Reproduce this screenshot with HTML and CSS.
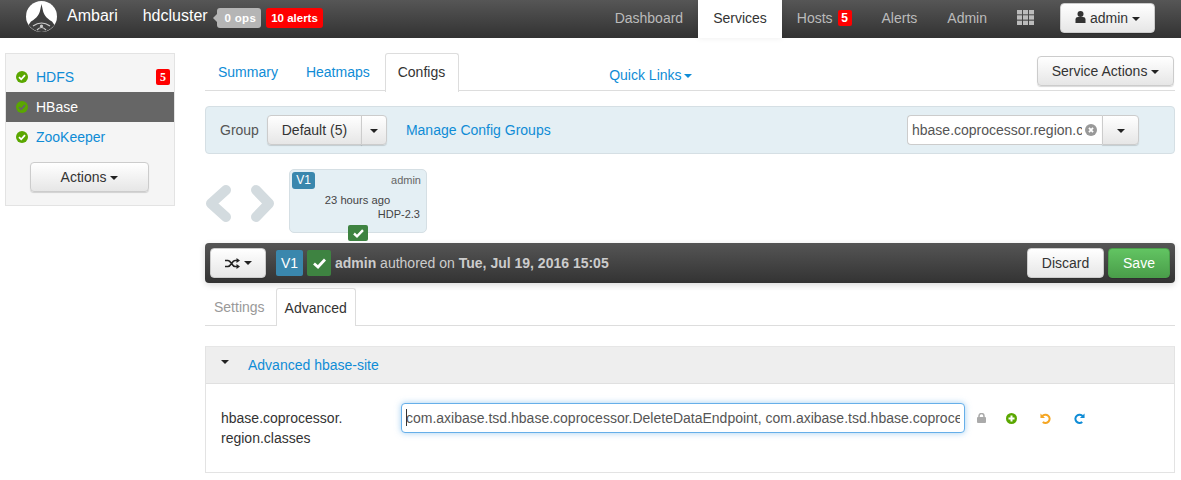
FILE: index.html
```html
<!DOCTYPE html>
<html lang="en">
<head>
  <meta charset="UTF-8">
  <title>Ambari - hdcluster</title>
  <link rel="stylesheet" href="styles.css">
</head>
<body>

<!-- top bar -->
<header class="navbar">
  <div class="brand">
    <svg class="logo" width="31" height="31" viewBox="0 0 31 31">
      <circle cx="15.500" cy="15.500" r="15.500" fill="#fff"/>
      <path d="M15.500 3L16.800 9C17.500 13 20 17 26 20.500L28.500 24C25 28 21 31 15.500 31C10 31 6 28 2.500 24L5 20.500C11 17 13.500 13 14.200 9Z" fill="#3f3f3f"/>
      <path d="M7 25Q15.500 19 24 25M11 29Q15.500 24 20 29" fill="none" stroke="#ccc" stroke-width="1.200"/>
      <circle cx="15.500" cy="25" r="1.600" fill="#ccc"/>
    </svg>
    <span class="brand-name">Ambari</span>
    <span class="cluster">hdcluster</span>
    <span class="ops">0 ops</span>
    <span class="alerts">10 alerts</span>
  </div>
  <nav class="topnav">
    <a class="topnav-item">Dashboard</a>
    <a class="topnav-item active">Services</a>
    <a class="topnav-item">Hosts <b class="count">5</b></a>
    <a class="topnav-item">Alerts</a>
    <a class="topnav-item">Admin</a>
    <a class="topnav-item grid-item">
      <svg width="17" height="15" viewBox="0 0 17 15" fill="#bbb">
        <rect width="5" height="4.300"/><rect x="6" width="5" height="4.300"/><rect x="12" width="5" height="4.300"/>
        <rect y="5.300" width="5" height="4.300"/><rect x="6" y="5.300" width="5" height="4.300"/><rect x="12" y="5.300" width="5" height="4.300"/>
        <rect y="10.700" width="5" height="4.300"/><rect x="6" y="10.700" width="5" height="4.300"/><rect x="12" y="10.700" width="5" height="4.300"/>
      </svg>
    </a>
  </nav>
  <button class="btn user-btn">
    <svg width="11" height="12" viewBox="0 0 10 12" fill="#333"><circle cx="5" cy="3" r="3"/><path d="M0 12V8.500C0 6.800 1.200 6 2.500 6H7.500C8.800 6 10 6.800 10 8.500V12Z"/></svg>
    admin <i class="caret"></i>
  </button>
</header>

<div class="page">

  <!-- service list -->
  <aside class="sidebar">
    <ul class="services">
      <li class="service"><svg class="ok" viewBox="0 0 12 12"><circle cx="6" cy="6" r="6"/><path d="M3 6.200L5.200 8.300L9 4.200"/></svg><a>HDFS</a><b class="count side-count">5</b></li>
      <li class="service active"><svg class="ok" viewBox="0 0 12 12"><circle cx="6" cy="6" r="6"/><path d="M3 6.200L5.200 8.300L9 4.200"/></svg><a>HBase</a></li>
      <li class="service"><svg class="ok" viewBox="0 0 12 12"><circle cx="6" cy="6" r="6"/><path d="M3 6.200L5.200 8.300L9 4.200"/></svg><a>ZooKeeper</a></li>
    </ul>
    <button class="btn actions-btn">Actions <i class="caret"></i></button>
  </aside>

  <main class="main">

    <div class="tabs service-tabs">
      <a class="tab">Summary</a>
      <a class="tab">Heatmaps</a>
      <a class="tab active">Configs</a>
      <a class="quick-links">Quick Links<i class="caret blue"></i></a>
      <button class="btn service-actions">Service Actions <i class="caret"></i></button>
    </div>

    <div class="group-bar">
      <span class="group-label">Group</span>
      <div class="btn-group">
        <button class="btn group-btn">Default (5)</button>
        <button class="btn split"><i class="caret"></i></button>
      </div>
      <a class="manage">Manage Config Groups</a>
      <div class="filter">
        <div class="filter-input">
          <input class="filter-text" type="text" value="hbase.coprocessor.region.classes" readonly>
          <svg class="clear" width="12" height="12" viewBox="0 0 13 13"><circle cx="6.500" cy="6.500" r="6.500" fill="#999"/><path d="M4.300 4.300L8.700 8.700M8.700 4.300L4.300 8.700" stroke="#fff" stroke-width="2"/></svg>
        </div>
        <button class="btn filter-drop"><i class="caret"></i></button>
      </div>
    </div>

    <div class="versions">
      <svg class="arrows" width="70" height="39" viewBox="0 0 70 39" fill="none" stroke="#d3dbdf" stroke-width="10" stroke-linecap="round" stroke-linejoin="round">
        <path d="M21 6L6 19.500L21 33"/><path d="M51 6L64 19.500L51 33"/>
      </svg>
      <div class="version-card">
        <div class="card-top"><span class="v-label small">V1</span><span class="card-user">admin</span></div>
        <div class="card-time">23 hours ago</div>
        <div class="card-stack">HDP-2.3</div>
        <span class="card-check"><svg width="11" height="9" viewBox="0 0 11 9" fill="none" stroke="#fff" stroke-width="2.400"><path d="M1 4.500L4 7.300L10 1.200"/></svg></span>
      </div>
    </div>

    <div class="version-bar">
      <button class="btn shuffle-btn">
        <svg width="15" height="11" viewBox="0 0 15 11" fill="none" stroke="#222" stroke-width="1.700"><path d="M0 2.500H3C6 2.500 7 8.500 10 8.500H12M0 8.500H3C6 8.500 7 2.500 10 2.500H12"/><path d="M11.500 0L15 2.500L11.500 5ZM11.500 6L15 8.500L11.500 11Z" fill="#222" stroke="none"/></svg>
        <i class="caret"></i>
      </button>
      <span class="v-label">V1</span>
      <span class="current-check"><svg width="13" height="11" viewBox="0 0 13 11" fill="none" stroke="#fff" stroke-width="2.800"><path d="M1 5.500L5 9L12 1.500"/></svg></span>
      <span class="authored"><b>admin</b> authored on <b>Tue, Jul 19, 2016 15:05</b></span>
      <button class="btn discard">Discard</button>
      <button class="btn save">Save</button>
    </div>

    <div class="tabs sub-tabs">
      <a class="tab muted">Settings</a>
      <a class="tab active">Advanced</a>
    </div>

    <section class="panel">
      <div class="panel-head">
        <i class="caret panel-caret"></i>
        <a>Advanced hbase-site</a>
      </div>
      <div class="panel-body">
        <div class="prop-name">hbase.coprocessor.<br>region.classes</div>
        <div class="prop-field">
          <input class="prop-input" type="text" value="com.axibase.tsd.hbase.coprocessor.DeleteDataEndpoint, com.axibase.tsd.hbase.coprocessor.CompactRawDataEndpoint" readonly>
          <span class="cursor"></span>
        </div>
        <div class="prop-icons">
          <svg class="lock" width="9" height="10" viewBox="0 0 9 10"><path d="M2 4.500V3a2.500 2.500 0 0 1 5 0V4.500" fill="none" stroke="#aaa" stroke-width="1.500"/><rect y="4" width="9" height="6" rx="1" fill="#aaa"/></svg>
          <svg width="11" height="11" viewBox="0 0 11 11"><circle cx="5.500" cy="5.500" r="5.500" fill="#5aa700"/><path d="M5.500 2.500V8.500M2.500 5.500H8.500" stroke="#fff" stroke-width="2"/></svg>
          <svg width="11" height="11" viewBox="0 0 12 12" fill="none"><path d="M2.500 3.500A4.500 4.500 0 1 1 3 9.700" stroke="#f5a623" stroke-width="2.200"/><path d="M0.500 0.500V5.500H5.500Z" fill="#f5a623"/></svg>
          <svg width="11" height="11" viewBox="0 0 12 12" fill="none"><path d="M9.500 3.500A4.500 4.500 0 1 0 9 9.700" stroke="#0f8cd6" stroke-width="2.200"/><path d="M11.500 0.500V5.500H6.500Z" fill="#0f8cd6"/></svg>
        </div>
      </div>
    </section>

  </main>
</div>

</body>
</html>
```

FILE: styles.css
```css
*{box-sizing:border-box}
body{margin:0;font-family:"Liberation Sans",Arial,sans-serif;font-size:14px;line-height:20px;color:#333;background:#fff;overflow:hidden}
a{color:#0f8cd6}
ul{list-style:none;margin:0;padding:0}
input{font:14px/20px "Liberation Sans",Arial,sans-serif;color:#555;outline:0}

.caret{display:inline-block;width:0;height:0;border-top:4px solid #222;border-left:4px solid transparent;border-right:4px solid transparent;vertical-align:middle}
.caret.blue{border-top-color:#0f8cd6;margin-left:2px}

.btn{font:14px/20px "Liberation Sans",Arial,sans-serif;height:30px;padding:0 12px;color:#333;background:linear-gradient(#fff,#e6e6e6);border:1px solid #ccc;border-radius:4px;box-shadow:0 1px 1px rgba(0,0,0,.15);white-space:nowrap}

/* top bar */
.navbar{display:flex;align-items:flex-start;height:38px;padding-left:26px;background:linear-gradient(#565656,#323232)}
.brand{display:flex;align-items:center;height:32px;color:#fff}
.logo{flex:none;margin-top:1px}
.brand-name{margin-left:10px;font-size:16px}
.cluster{margin-left:25px;font-size:16px}
.ops,.alerts{font-size:11.500px;font-weight:bold;line-height:20px;height:20px;border-radius:3px;margin-top:3px}
.ops{position:relative;margin-left:9px;padding:0 5px 0 8px;color:#fff;background:#b5b5b5;letter-spacing:.3px}
.ops:before{content:"";position:absolute;left:-4px;top:6px;border-top:4px solid transparent;border-bottom:4px solid transparent;border-right:4px solid #b5b5b5}
.alerts{margin-left:5px;padding:0 5px;color:#fff;background:#f00}
.topnav{display:flex;margin-left:auto;height:38px}
.topnav-item{display:block;padding:8px 15px 0;height:38px;color:#bbb}
.topnav-item.active{color:#333;background:#fff;box-shadow:0 0 6px rgba(0,0,0,.08)}
.grid-item{padding:10px 15px 0}
.count{display:inline-block;width:14px;text-align:center;background:#f00;color:#fff;font-size:12px;line-height:16px;height:16px;border-radius:2px;vertical-align:1px;margin-left:1px}
.user-btn{margin:3px 26px 0 11px;width:95px;padding:0}

.page{display:flex;padding:15px 6px 0 5px}

/* service list */
.sidebar{flex:none;width:170px;height:153px;background:#f5f5f5;border:1px solid #e3e3e3}
.services{padding-top:8px}
.service{display:flex;align-items:center;height:30px;padding-left:10px}
.service a{margin-left:8px}
.service.active{background:#666}
.service.active a{color:#fff}
.ok{width:12px;height:12px;flex:none}
.ok circle{fill:#5aa700}
.ok path{fill:none;stroke:#fff;stroke-width:1.800}
.service.active .ok path{stroke:#666}
.side-count{margin-left:auto;margin-right:4px;font-family:"Liberation Serif",serif}
.actions-btn{display:block;width:119px;margin:10px 0 0 24px;padding:0}

/* main column */
.main{flex:1;min-width:0;margin-left:30px}
.tabs{display:flex;align-items:flex-end;border-bottom:1px solid #ddd}
.tab{display:block;height:38px;padding:8px 12px 0;margin-right:2px;border:1px solid transparent;border-bottom:0}
.tab.active{color:#333;height:39px;margin-bottom:-1px;background:#fff;border-color:#ddd;border-radius:3px 3px 0 0}
.tab.muted{color:#999}
.service-tabs{height:38px;align-items:flex-start}
.service-tabs .tab.active{padding-right:13px}
.quick-links{margin-left:148px;margin-top:12px}
.service-actions{margin:3px 1px 0 auto;width:137px;padding:0}

.group-bar{display:flex;align-items:center;height:48px;margin-top:15px;padding-left:14px;background:#e4eff4;border:1px solid #d5dfe4;border-radius:4px}
.group-label{color:#555}
.btn-group{display:flex;margin-left:8px}
.group-btn{width:95px;padding:0;border-radius:4px 0 0 4px}
.split{width:26px;padding:0;margin-left:-1px;border-radius:0 4px 4px 0}
.manage{margin-left:19px}
.filter{display:flex;margin-left:auto;margin-right:35px}
.filter-input{display:flex;align-items:center;width:195px;height:30px;background:#fff;border:1px solid #ccc;border-right:0;border-radius:4px 0 0 4px;padding-left:4px}
.filter-text{flex:1;min-width:0;padding:0;border:0;background:transparent}
.clear{flex:none;margin:0 5px 0 3px}
.filter-drop{width:37px;padding:0;border-radius:0 4px 4px 0}

.versions{display:flex;align-items:flex-start;height:74px;margin-top:15px}
.arrows{flex:none;margin:15px 14px 0 0}
.version-card{position:relative;width:138px;height:64px;padding:2px 5px 0 2px;background:#e4eff4;border:1px solid #d5dfe4;border-radius:5px;font-size:11px;line-height:15px;color:#444}
.card-top{display:flex;justify-content:space-between;align-items:center}
.card-user{color:#666;margin-top:-1px}
.card-time{margin-top:4px;padding-left:2px;text-align:center;font-size:11.200px}
.card-stack{margin:-1px 1px 0 0;text-align:right}
.card-check{position:absolute;left:58px;top:55px;display:flex;align-items:center;justify-content:center;width:20px;height:16px;background:#3e8341;border-radius:2px}
.v-label{display:flex;align-items:center;justify-content:center;width:27px;height:26px;color:#fff;background:#3a87ad;border-radius:2px;font-size:14px}
.v-label.small{width:23px;height:17px;font-size:12px;border-radius:3px}

.version-bar{display:flex;align-items:center;height:40px;padding:0 5px;background:linear-gradient(#555,#333);border-radius:4px;box-shadow:0 2px 6px rgba(0,0,0,.15)}
.shuffle-btn{display:flex;align-items:center;justify-content:center;gap:4px;width:56px;padding:0}
.version-bar .v-label{margin-left:10px}
.current-check{display:flex;align-items:center;justify-content:center;width:24px;height:26px;margin-left:4px;background:#3e8341;border-radius:2px}
.authored{margin-left:4px;color:#ccc;white-space:nowrap}
.discard{margin-left:auto;width:77px;padding:0}
.save{width:62px;padding:0;margin-left:4px;color:#fff;background:linear-gradient(#62c462,#4a9e4a);border-color:#4a9e4a}

.sub-tabs{height:38px;margin-top:5px}
.sub-tabs .tab{padding:9px 8px 0;margin-right:0}
.sub-tabs .tab.active{height:38px}
.sub-tabs .tab.muted{padding-right:10px}

/* config section */
.panel{margin-top:20px;height:127px;border:1px solid #e3e3e3;border-top-color:#e6e6e6}
.panel-head{display:flex;align-items:center;height:37px;padding-left:15px;background:#eee;border-bottom:1px solid #e0e0e0}
.panel-caret{margin-top:-6px}
.panel-head a{margin-left:19px}
.panel-body{display:flex;align-items:flex-start;padding:19px 0 0 15px}
.prop-name{width:180px;flex:none;padding-top:5px}
.prop-field{position:relative;flex:none;width:564px;height:30px;margin-right:12px}
.prop-input{display:block;width:100%;height:30px;padding:4px;background:#fff;border:1px solid #66afe9;border-radius:4px;box-shadow:0 0 6px rgba(102,175,233,.6)}
.cursor{position:absolute;left:5px;top:6px;width:1px;height:17px;background:#333}
.prop-icons{display:flex;align-items:center;height:30px;gap:23px}
.lock{margin-right:-3px}
```
